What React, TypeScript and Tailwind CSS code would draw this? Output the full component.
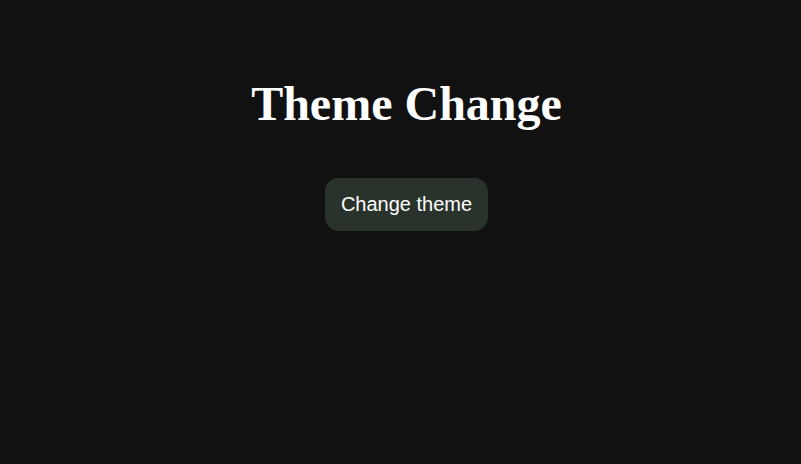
import React, { useState } from 'react';

export default function App() {
  const [dark, setDark] = useState(true);

  return (
    <div
      className={`w-full min-h-[464px] flex flex-col items-center pt-[77px] pl-[12px] ${
        dark ? 'bg-[#111111] text-white' : 'bg-white text-black'
      }`}
    >
      <h1 className="text-[48px] font-bold leading-[53px] font-['Liberation_Serif',serif]">
        Theme Change
      </h1>
      <button
        onClick={() => setDark(!dark)}
        className="mt-[48px] px-[16px] py-[15px] rounded-[14px] bg-[#2a332b] text-white text-[20px] leading-[23px] font-['Liberation_Sans',Arial,sans-serif]"
      >
        Change theme
      </button>
    </div>
  );
}
